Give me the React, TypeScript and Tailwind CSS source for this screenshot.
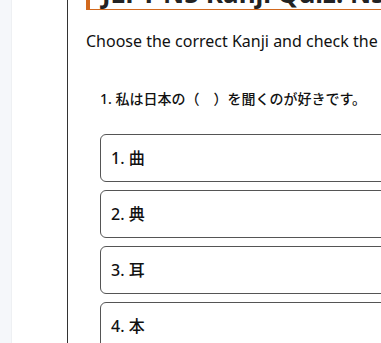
import React from "react";

const jp = { fontFamily: '"Noto Sans", "Noto Sans CJK JP", sans-serif' };

export default function App() {
  const options = ["曲", "典", "耳", "本"];
  return (
    <div className="flex h-[343px] w-[381px] overflow-hidden bg-white" style={jp}>
      <div className="w-[12px] shrink-0 bg-[#f5f7fa] border-r border-[#eef0f3]" />
      <div className="w-[55px] shrink-0 bg-white" />
      <div className="w-[800px] shrink-0 border-l border-[#333] pl-[18px]">
        <div className="-mt-[22px] border-l-[4px] border-b border-[#d2691e] pl-[12px] pb-[1px]">
          <h1 className="text-[26px] font-bold leading-[30px] text-[#222]">
            JLPT N5 Kanji Quiz: N5 Kanji Test
          </h1>
        </div>
        <p className="mt-[19px] text-[16px] leading-[24px] text-[#111]">
          Choose the correct Kanji and check the answer.
        </p>
        <div className="mt-[36px] pl-[14px]">
          <p className="text-[14px] font-medium leading-[20px] text-[#111]">
            1. 私は日本の（　）を聞くのが好きです。
          </p>
          <div className="mt-[25px] flex flex-col gap-[8px]">
            {options.map((o, i) => (
              <div
                key={i}
                className="flex h-[48px] items-center rounded-[6px] border border-[#555] px-[10px] text-[16px] font-medium text-[#111]"
              >
                {i + 1}. {o}
              </div>
            ))}
          </div>
        </div>
      </div>
    </div>
  );
}
